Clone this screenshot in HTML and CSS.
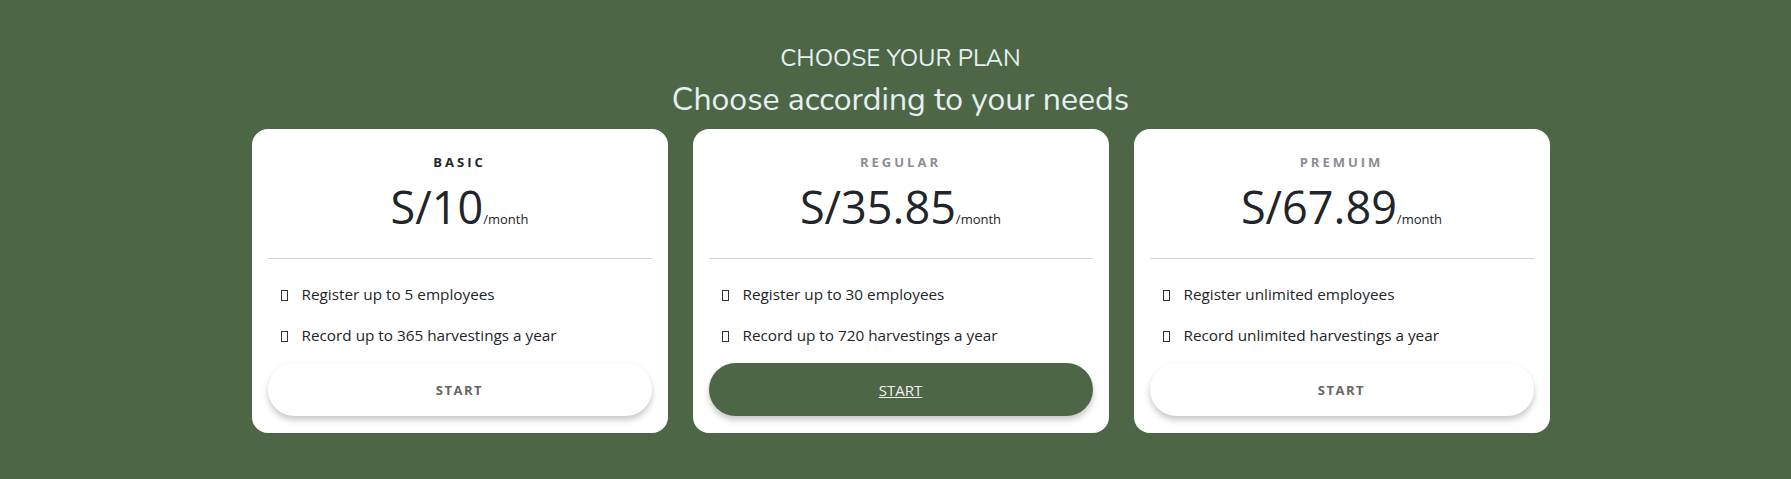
FILE: index.html
```html
<!DOCTYPE html>
<html lang="en">
<head>
<meta charset="utf-8">
<title>Pricing</title>
<link rel="stylesheet" href="styles.css">
</head>
<body>
<section class="pricing">
  <header class="heading">
    <p class="eyebrow">CHOOSE YOUR PLAN</p>
    <h2 class="title">Choose according to your needs</h2>
  </header>
  <div class="cards">
    <article class="card">
      <h3 class="plan plan-active">BASIC</h3>
      <p class="price">S/10<span class="per">/month</span></p>
      <hr class="divider">
      <ul class="features">
        <li><span class="box"></span>Register up to 5 employees</li>
        <li><span class="box"></span>Record up to 365 harvestings a year</li>
      </ul>
      <a class="btn" href="#">START</a>
    </article>
    <article class="card">
      <h3 class="plan">REGULAR</h3>
      <p class="price">S/35.85<span class="per">/month</span></p>
      <hr class="divider">
      <ul class="features">
        <li><span class="box"></span>Register up to 30 employees</li>
        <li><span class="box"></span>Record up to 720 harvestings a year</li>
      </ul>
      <a class="btn btn-primary" href="#">START</a>
    </article>
    <article class="card">
      <h3 class="plan">PREMUIM</h3>
      <p class="price">S/67.89<span class="per">/month</span></p>
      <hr class="divider">
      <ul class="features">
        <li><span class="box"></span>Register unlimited employees</li>
        <li><span class="box"></span>Record unlimited harvestings a year</li>
      </ul>
      <a class="btn" href="#">START</a>
    </article>
  </div>
</section>
</body>
</html>
```
FILE: styles.css
```css
html, body {
  margin: 0;
  padding: 0;
  background: #4d6645;
}
body {
  font-family: "Open Sans", "Noto Sans", sans-serif;
  color: #212529;
  min-height: 479px;
}
.pricing {
  padding: 42px 0 0 10px;
  display: flex;
  flex-direction: column;
  align-items: center;
}
.heading {
  text-align: center;
  color: #e6f0f2;
  font-family: "Nunito", "Lato", "Noto Sans", sans-serif;
}
.eyebrow {
  margin: 0;
  font-size: 24px;
  line-height: 32px;
  font-weight: 400;
}
.title {
  margin: 6px 0 0;
  font-size: 32px;
  line-height: 40px;
  font-weight: 400;
}
.cards {
  display: flex;
  gap: 25px;
  margin-top: 9px;
}
.card {
  width: 416px;
  box-sizing: border-box;
  background: #fff;
  border-radius: 16px;
  padding: 24px 16px 17px;
  display: flex;
  flex-direction: column;
}
.plan {
  margin: 0;
  text-align: center;
  font-size: 13px;
  line-height: 18px;
  font-weight: 700;
  letter-spacing: 3px;
  color: #8a8d91;
}
.plan-active {
  color: #212529;
}
.price {
  margin: 6px 0 0;
  text-align: center;
  font-size: 45px;
  line-height: 60px;
  font-weight: 400;
}
.per {
  font-size: 13px;
  letter-spacing: 0;
}
.divider {
  margin: 9px 0 0;
  border: 0;
  border-top: 1px solid #d2d2d2;
}
.features {
  list-style: none;
  margin: 24px 0 0;
  padding: 0 0 0 12px;
  font-size: 15.3px;
  line-height: 22px;
}
.features li {
  display: flex;
  align-items: center;
  margin-bottom: 19px;
}
.features li:last-child {
  margin-bottom: 17px;
}
.box {
  width: 5px;
  height: 9px;
  border: 1px solid #333;
  margin: 3px 14px 0 1px;
  flex: none;
}
.btn {
  height: 53px;
  border-radius: 27px;
  background: #fff;
  display: flex;
  align-items: center;
  justify-content: center;
  text-decoration: none;
  color: #666;
  font-size: 13px;
  font-weight: 700;
  letter-spacing: 1.5px;
  box-shadow: 0 4px 6px rgba(0, 0, 0, 0.22);
}
.btn-primary {
  background: #4d6645;
  color: #f2f2f2;
  font-weight: 400;
  letter-spacing: 0;
  font-size: 15px;
  text-decoration: underline;
}
```
